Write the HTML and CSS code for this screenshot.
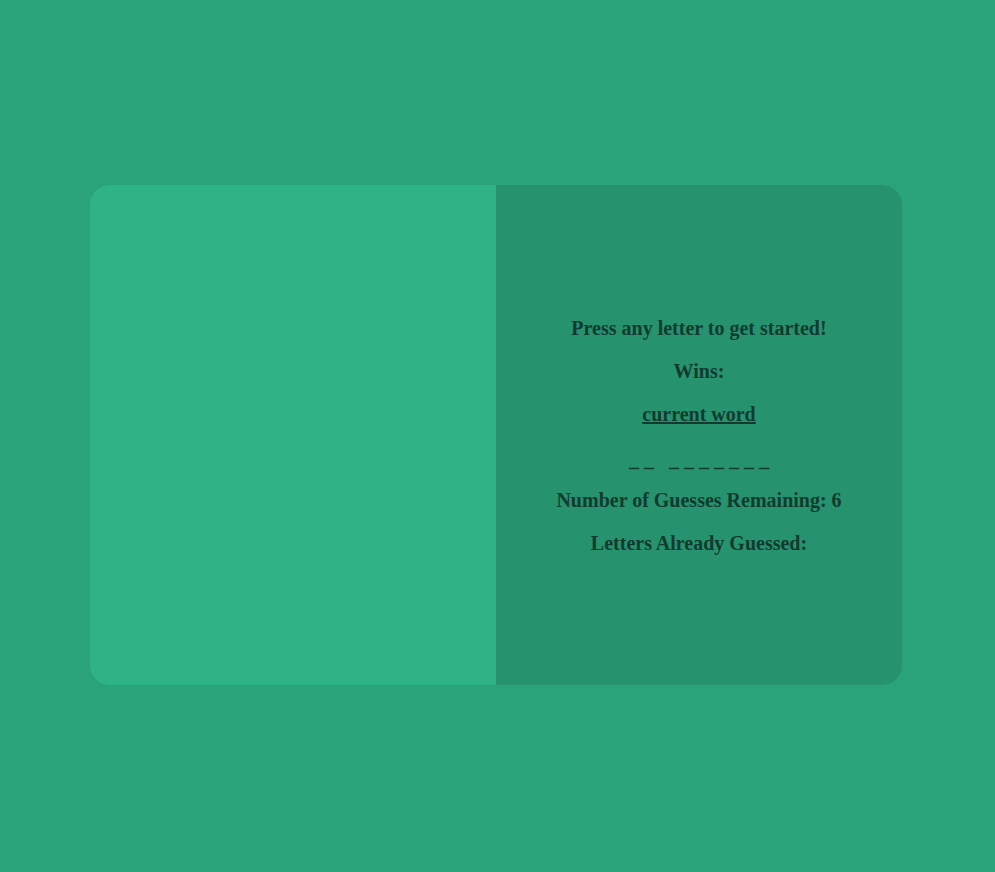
FILE: index.html
```html
<!DOCTYPE html>
<html>
<head>
<meta charset="utf-8">
<link rel="stylesheet" href="styles.css">
<title>Hangman</title>
</head>
<body>
<div class="page">
  <div class="card">
    <div class="pane-left"></div>
    <div class="pane-right">
      <p class="line g20">Press any letter to get started!</p>
      <p class="line g20">Wins:</p>
      <p class="line g22"><u>current word</u></p>
      <p class="line g18 dashes">_ _ &nbsp; _ _ _ _ _ _ _</p>
      <p class="line g20">Number of Guesses Remaining: 6</p>
      <p class="line">Letters Already Guessed:</p>
    </div>
  </div>
</div>
</body>
</html>
```
FILE: styles.css
```css
html, body {
  margin: 0;
  padding: 0;
  background: #2aa37a;
}
.page {
  padding: 185px 0 0 90px;
}
.card {
  width: 812px;
  height: 500px;
  display: flex;
  border-radius: 20px;
  overflow: hidden;
}
.pane-left {
  flex: 1;
  background: #2fb386;
}
.pane-right {
  flex: 1;
  box-sizing: border-box;
  padding-top: 2px;
  background: #26926e;
  display: flex;
  flex-direction: column;
  align-items: center;
  justify-content: center;
  font-family: "Liberation Serif", "Times New Roman", serif;
  font-weight: bold;
  font-size: 20px;
  color: #113b2e;
}
.line {
  margin: 0;
  line-height: 23px;
  white-space: pre;
}
.g20 { margin-bottom: 20px; }
.g22 { margin-bottom: 22px; }
.g18 { margin-bottom: 18px; }
.dashes { white-space: normal; }
```
